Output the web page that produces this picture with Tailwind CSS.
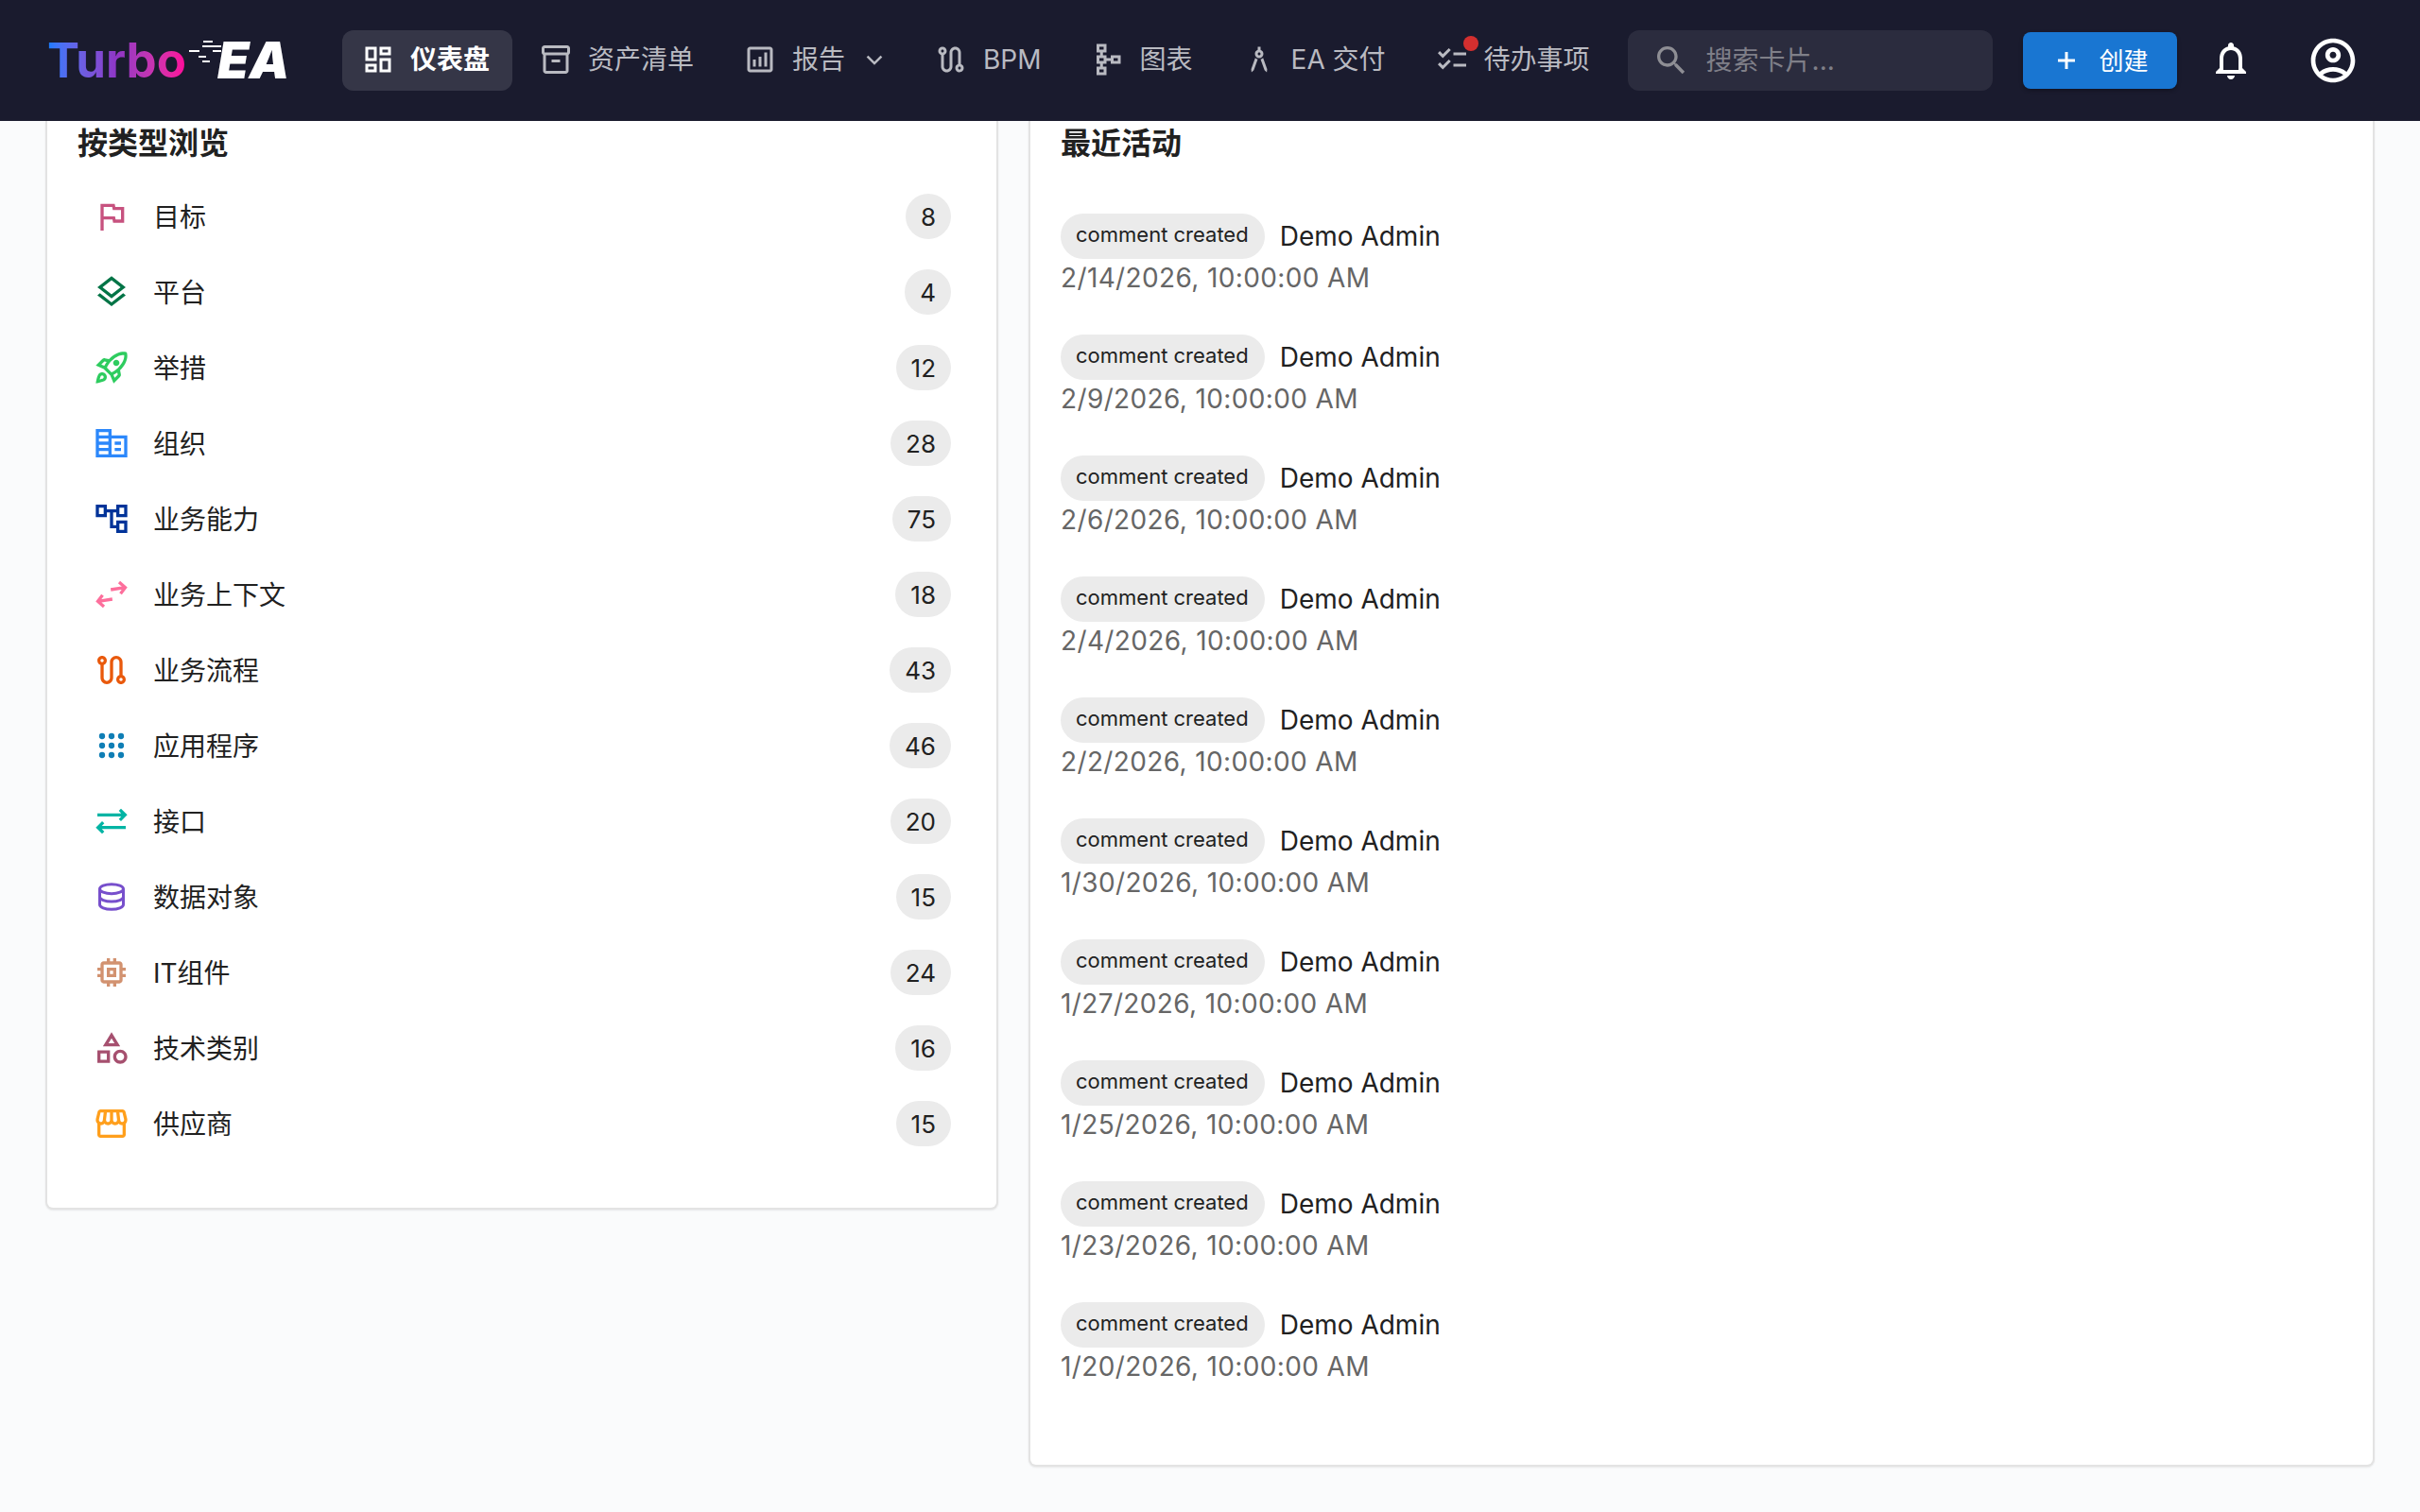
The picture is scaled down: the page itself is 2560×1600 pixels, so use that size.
<!DOCTYPE html>
<html lang="zh">
<head>
  <meta charset="UTF-8">
  <title>Turbo EA</title>
  <script src="https://cdn.jsdelivr.net/npm/@tailwindcss/browser@4"></script>
</head>
<body class="h-[1600px] overflow-hidden bg-[#fafbfc] font-['Inter','Noto_Sans_CJK_SC',sans-serif] text-[#212121]">

<!-- top bar -->
<header class="flex h-32 items-center bg-[#1a1b2e] pl-12 text-[28px] text-[#b9bac1]">
  <div class="flex w-[314px] items-center pl-0.5">
    <span class="bg-linear-to-r from-[#0a7cff] via-[#8f35c6] to-[#ff0099] bg-clip-text text-[51px] leading-[64px] font-bold text-transparent">Turbo</span>
    <svg class="ml-[3px] h-[44px] w-[34px] shrink-0" viewBox="0 0 34 44" fill="#fff">
      <rect x="15" y="1" width="10" height="2"/><rect x="14" y="6" width="20" height="2"/>
      <rect x="0" y="11" width="11" height="2"/><rect x="25" y="11" width="9" height="2"/>
      <rect x="10" y="17" width="8" height="2"/><rect x="14" y="22" width="8" height="2"/>
    </svg>
    <span class="-ml-[4px] text-[54px] leading-[64px] font-black text-white italic">EA</span>
  </div>

  <nav class="flex items-center gap-2">
    <a class="flex h-16 items-center gap-[14px] rounded-xl bg-white/12 pr-6 pb-[2px] pl-[18px] font-semibold text-white">
      <span class="flex w-10 justify-center"><svg class="size-9" viewBox="0 0 24 24" fill="currentColor"><path d="M19 5v2h-4V5h4M9 5v6H5V5h4m10 8v6h-4v-6h4M9 17v2H5v-2h4M21 3h-8v6h8V3zM11 3H3v10h8V3zm10 8h-8v10h8V11zm-10 4H3v6h8v-6z"/></svg></span>
      仪表盘
    </a>
    <a class="flex h-16 items-center gap-[14px] pr-6 pb-[2px] pl-[18px]">
      <span class="flex w-10 justify-center"><svg class="size-9" viewBox="0 0 24 24" fill="currentColor"><path d="M20 2H4c-1 0-2 .9-2 2v3.01c0 .72.43 1.34 1 1.69V20c0 1.1 1.1 2 2 2h14c.9 0 2-.9 2-2V8.7c.57-.35 1-.97 1-1.69V4c0-1.1-1-2-2-2zm-1 18H5V9h14v11zm1-13H4V4h16v3z"/><path d="M9 12h6v2H9z"/></svg></span>
      资产清单
    </a>
    <a class="flex h-16 items-center gap-[14px] pr-[15px] pb-[2px] pl-[18px]">
      <span class="flex w-10 justify-center"><svg class="size-9" viewBox="0 0 24 24" fill="currentColor"><path d="M19 3H5c-1.1 0-2 .9-2 2v14c0 1.1.9 2 2 2h14c1.1 0 2-.9 2-2V5c0-1.1-.9-2-2-2zm0 16H5V5h14v14z"/><path d="M7 12h2v5H7zM11 10h2v7h-2zM15 7h2v10h-2z"/></svg></span>
      报告
      <svg class="-ml-[3px] size-10" viewBox="0 0 24 24" fill="currentColor"><path d="M15.9 9.4 12 13.3 8.1 9.4 7 10.5l5 5 5-5z"/></svg>
    </a>
    <a class="flex h-16 items-center gap-[14px] pr-6 pb-[2px] pl-[18px]">
      <span class="flex w-10 justify-center"><svg class="size-9" viewBox="0 0 24 24" fill="currentColor"><path d="M19 15.18V7c0-2.21-1.79-4-4-4s-4 1.79-4 4v10c0 1.1-.9 2-2 2s-2-.9-2-2V8.82C8.16 8.4 9 7.3 9 6c0-1.66-1.34-3-3-3S3 4.34 3 6c0 1.3.84 2.4 2 2.82V17c0 2.21 1.79 4 4 4s4-1.79 4-4V7c0-1.1.9-2 2-2s2 .9 2 2v8.18c-1.16.41-2 1.51-2 2.82 0 1.66 1.34 3 3 3s3-1.34 3-3c0-1.3-.84-2.4-2-2.82zM6 7c-.55 0-1-.45-1-1s.45-1 1-1 1 .45 1 1-.45 1-1 1zm12 12c-.55 0-1-.45-1-1s.45-1 1-1 1 .45 1 1-.45 1-1 1z"/></svg></span>
      BPM
    </a>
    <a class="flex h-16 items-center gap-[14px] pr-6 pb-[2px] pl-[18px]">
      <span class="flex w-10 justify-center"><svg class="size-9" viewBox="0 0 24 24" fill="currentColor" fill-rule="evenodd"><path d="M14 9v2h-3V9H8.5V7H11V1H4v6h2.5v2H4v6h2.5v2H4v6h7v-6H8.5v-2H11v-2h3v2h7V9h-7zM6 3h3v2H6V3zm3 18H6v-2h3v2zm0-8H6v-2h3v2zm10 0h-3v-2h3v2z"/></svg></span>
      图表
    </a>
    <a class="flex h-16 items-center gap-[14px] pr-6 pb-[2px] pl-[18px]">
      <span class="flex w-10 justify-center"><svg class="size-9" viewBox="0 0 24 24" fill="currentColor"><path d="M6.36 18.78 6.61 21l1.62-1.54 2.77-7.6c-.68-.17-1.28-.51-1.77-.98l-2.87 7.9zM14.77 10.88c-.49.47-1.1.81-1.77.98l2.77 7.6L17.39 21l.26-2.22-2.88-7.9zM15 8c0-1.3-.84-2.4-2-2.82V3h-2v2.18C9.84 5.6 9 6.7 9 8c0 1.66 1.34 3 3 3s3-1.34 3-3zm-3 1c-.55 0-1-.45-1-1s.45-1 1-1 1 .45 1 1-.45 1-1 1z"/></svg></span>
      EA 交付
    </a>
    <a class="flex h-16 items-center gap-[14px] pr-6 pb-[2px] pl-[18px]">
      <span class="relative flex w-10 justify-center">
        <svg class="size-9" viewBox="0 0 24 24" fill="currentColor"><path d="M22 7h-9v2h9V7zm0 8h-9v2h9v-2zM5.54 11 2 7.46l1.41-1.41 2.12 2.12 4.24-4.24 1.41 1.41L5.54 11zm0 8L2 15.46l1.41-1.41 2.12 2.12 4.24-4.24 1.41 1.41L5.54 19z"/></svg>
        <span class="absolute -top-[7px] -right-[8px] size-4 rounded-full bg-[#d32f2f]"></span>
      </span>
      待办事项
    </a>
  </nav>

  <div class="ml-4 flex h-16 w-[386px] items-center rounded-xl bg-white/8 pl-[26px] text-[#7f7f88]">
    <svg class="size-10 shrink-0 text-[#8e8e94]" viewBox="0 0 24 24" fill="currentColor"><path d="M15.5 14h-.79l-.28-.27C15.41 12.59 16 11.11 16 9.5 16 5.91 13.09 3 9.5 3S3 5.91 3 9.5 5.91 16 9.5 16c1.61 0 3.09-.59 4.23-1.57l.27.28v.79l5 4.99L20.49 19l-4.99-5zm-6 0C7.01 14 5 11.99 5 9.5S7.01 5 9.5 5 14 7.01 14 9.5 11.99 14 9.5 14z"/></svg>
    <span class="ml-[17px]">搜索卡片...</span>
  </div>

  <button class="ml-8 flex h-[60px] w-[163px] items-center rounded-lg bg-[#1976d2] pl-[28px] text-[26px] text-white shadow-[0_2px_4px_rgba(0,0,0,0.3)]">
    <svg class="size-9 shrink-0" viewBox="0 0 24 24" fill="currentColor"><path d="M18 13h-5v5h-2v-5H6v-2h5V6h2v5h5v2z"/></svg>
    <span class="ml-[17px]">创建</span>
  </button>

  <svg class="ml-[33px] size-12 shrink-0 text-white" viewBox="0 0 24 24" fill="currentColor"><path d="M12 22c1.1 0 2-.9 2-2h-4c0 1.1.9 2 2 2zm6-6v-5c0-3.07-1.63-5.64-4.5-6.32V4c0-.83-.67-1.5-1.5-1.5s-1.5.67-1.5 1.5v.68C7.64 5.36 6 7.92 6 11v5l-2 2v1h16v-1l-2-2zm-2 1H8v-6c0-2.48 1.51-4.5 4-4.5s4 2.02 4 4.5v6z"/></svg>
  <svg class="ml-14 size-14 shrink-0 text-white" viewBox="0 0 24 24" fill="currentColor"><path d="M12 2C6.48 2 2 6.48 2 12s4.48 10 10 10 10-4.48 10-10S17.52 2 12 2zM7.35 18.5C8.66 17.56 10.26 17 12 17s3.34.56 4.65 1.5c-1.31.94-2.91 1.5-4.65 1.5s-3.34-.56-4.65-1.5zm10.79-1.38C16.45 15.8 14.32 15 12 15s-4.45.8-6.14 2.12C4.7 15.73 4 13.95 4 12c0-4.42 3.58-8 8-8s8 3.58 8 8c0 1.95-.7 3.73-1.86 5.12z"/><path d="M12 6c-1.93 0-3.5 1.57-3.5 3.5S10.07 13 12 13s3.5-1.57 3.5-3.5S13.93 6 12 6zm0 5c-.83 0-1.5-.67-1.5-1.5S11.17 8 12 8s1.5.67 1.5 1.5S12.83 11 12 11z"/></svg>
</header>

<main class="flex items-start gap-8 px-12">
  <!-- cards by type -->
  <section class="w-[1008px] rounded-b-lg border-2 border-t-0 border-[#e3e3e3] bg-white px-8 pb-[49px] shadow-[0_1px_2px_rgba(0,0,0,0.08)]">
    <h2 class="pt-0.5 text-[32px] leading-11 font-semibold">按类型浏览</h2>
    <ul class="mt-[15px] text-[28px]">
      <li class="flex h-20 items-center px-4"><svg class="mr-6 size-10 text-[#c7527f]" viewBox="0 0 24 24" fill="currentColor"><path d="M14.4 6 14 4H5v17h2v-7h5.6l.4 2h7V6h-5.6zm3.6 8h-3.4l-.4-2H7V6h5.4l.4 2H18v6z"/></svg><span class="flex-1 pt-0.5">目标</span><span class="flex h-12 items-center rounded-full bg-[#ebebeb] px-4 text-[26px]">8</span></li>
      <li class="flex h-20 items-center px-4"><svg class="mr-6 size-10 text-[#027446]" viewBox="0 0 24 24" fill="currentColor"><path d="m11.99 18.54-7.37-5.73L3 14.07l9 7 9-7-1.63-1.27zM12 16l7.36-5.73L21 9l-9-7-9 7 1.63 1.27L12 16zm0-11.47L17.74 9 12 13.47 6.26 9 12 4.53z"/></svg><span class="flex-1 pt-0.5">平台</span><span class="flex h-12 items-center rounded-full bg-[#ebebeb] px-4 text-[26px]">4</span></li>
      <li class="flex h-20 items-center px-4"><svg class="mr-6 size-10 text-[#2ecc5f]" viewBox="0 0 24 24" fill="currentColor"><path d="M6 15c-.83 0-1.58.34-2.12.88C2.7 17.06 2 22 2 22s4.94-.7 6.12-1.88c.54-.54.88-1.29.88-2.12 0-1.66-1.34-3-3-3zm.71 3.71c-.28.28-2.17.76-2.17.76s.47-1.88.76-2.17c.17-.19.42-.3.7-.3.55 0 1 .45 1 1 0 .28-.11.53-.29.71zm10.71-5.06c6.36-6.36 4.24-11.31 4.24-11.31S16.71.22 10.35 6.58l-2.49-.5c-.65-.13-1.33.08-1.81.55L2 10.69l5 2.14L11.17 17l2.14 5 4.05-4.05c.47-.47.68-1.15.55-1.81l-.49-2.49zM7.41 10.83l-1.91-.82 1.97-1.97 1.44.29c-.57.83-1.08 1.7-1.5 2.5zm6.58 7.67-.82-1.91c.8-.42 1.67-.93 2.49-1.5l.29 1.44-1.96 1.97zM16 12.24c-1.32 1.32-3.38 2.4-4.04 2.73l-2.93-2.93c.32-.65 1.4-2.71 2.73-4.04 4.68-4.68 8.23-3.91 8.23-3.91s.77 3.55-3.99 8.15zM15 11c1.1 0 2-.9 2-2s-.9-2-2-2-2 .9-2 2 .9 2 2 2z"/></svg><span class="flex-1 pt-0.5">举措</span><span class="flex h-12 items-center rounded-full bg-[#ebebeb] px-4 text-[26px]">12</span></li>
      <li class="flex h-20 items-center px-4"><svg class="mr-6 size-10 text-[#2c88fb]" viewBox="0 0 24 24" fill="currentColor"><path d="M12 7V3H2v18h20V7H12zM10 19H4v-2h6v2zm0-4H4v-2h6v2zm0-4H4V9h6v2zm0-4H4V5h6v2zm10 12h-8V9h8v10zm-2-8h-4v2h4v-2zm0 4h-4v2h4v-2z"/></svg><span class="flex-1 pt-0.5">组织</span><span class="flex h-12 items-center rounded-full bg-[#ebebeb] px-4 text-[26px]">28</span></li>
      <li class="flex h-20 items-center px-4"><svg class="mr-6 size-10 text-[#003399]" viewBox="0 0 24 24" fill="currentColor"><path d="M22 11V3h-7v3H9V3H2v8h7V8h2v10h4v3h7v-8h-7v3h-2V8h2v3h7zM7 9H4V5h3v4zm10 6h3v4h-3v-4zm0-10h3v4h-3V5z"/></svg><span class="flex-1 pt-0.5">业务能力</span><span class="flex h-12 items-center rounded-full bg-[#ebebeb] px-4 text-[26px]">75</span></li>
      <li class="flex h-20 items-center px-4"><svg class="mr-6 size-10 text-[#fd6f9c]" viewBox="0 0 24 24" fill="none" stroke="currentColor" stroke-width="2"><path d="M11.5 9 20.5 7.6M16.8 4.2l3.9 3.4-3 3.9M12.5 15 3.5 16.4M7.2 19.8l-3.9-3.4 3-3.9"/></svg><span class="flex-1 pt-0.5">业务上下文</span><span class="flex h-12 items-center rounded-full bg-[#ebebeb] px-4 text-[26px]">18</span></li>
      <li class="flex h-20 items-center px-4"><svg class="mr-6 size-10 text-[#e9590c]" viewBox="0 0 24 24" fill="currentColor"><path d="M19 15.18V7c0-2.21-1.79-4-4-4s-4 1.79-4 4v10c0 1.1-.9 2-2 2s-2-.9-2-2V8.82C8.16 8.4 9 7.3 9 6c0-1.66-1.34-3-3-3S3 4.34 3 6c0 1.3.84 2.4 2 2.82V17c0 2.21 1.79 4 4 4s4-1.79 4-4V7c0-1.1.9-2 2-2s2 .9 2 2v8.18c-1.16.41-2 1.51-2 2.82 0 1.66 1.34 3 3 3s3-1.34 3-3c0-1.3-.84-2.4-2-2.82zM6 7c-.55 0-1-.45-1-1s.45-1 1-1 1 .45 1 1-.45 1-1 1zm12 12c-.55 0-1-.45-1-1s.45-1 1-1 1 .45 1 1-.45 1-1 1z"/></svg><span class="flex-1 pt-0.5">业务流程</span><span class="flex h-12 items-center rounded-full bg-[#ebebeb] px-4 text-[26px]">43</span></li>
      <li class="flex h-20 items-center px-4"><svg class="mr-6 size-10 text-[#0f7eb5]" viewBox="0 0 24 24" fill="currentColor"><circle cx="6" cy="6" r="1.9"/><circle cx="12" cy="6" r="1.9"/><circle cx="18" cy="6" r="1.9"/><circle cx="6" cy="12" r="1.9"/><circle cx="12" cy="12" r="1.9"/><circle cx="18" cy="12" r="1.9"/><circle cx="6" cy="18" r="1.9"/><circle cx="12" cy="18" r="1.9"/><circle cx="18" cy="18" r="1.9"/></svg><span class="flex-1 pt-0.5">应用程序</span><span class="flex h-12 items-center rounded-full bg-[#ebebeb] px-4 text-[26px]">46</span></li>
      <li class="flex h-20 items-center px-4"><svg class="mr-6 size-10 text-[#02b4a4]" viewBox="0 0 24 24" fill="currentColor"><path d="M7.41 13.41 6 12l-4 4 4 4 1.41-1.41L5.83 17H21v-2H5.83zM16.59 10.59 18 12l4-4-4-4-1.41 1.41L18.17 7H3v2h15.17z"/></svg><span class="flex-1 pt-0.5">接口</span><span class="flex h-12 items-center rounded-full bg-[#ebebeb] px-4 text-[26px]">20</span></li>
      <li class="flex h-20 items-center px-4"><svg class="mr-6 size-10 text-[#774fcc]" viewBox="0 0 24 24" fill="none" stroke="currentColor" stroke-width="1.8"><ellipse cx="12" cy="7" rx="7.5" ry="3"/><path d="M4.5 7v10c0 1.66 3.36 3 7.5 3s7.5-1.34 7.5-3V7M4.5 12c0 1.66 3.36 3 7.5 3s7.5-1.34 7.5-3"/></svg><span class="flex-1 pt-0.5">数据对象</span><span class="flex h-12 items-center rounded-full bg-[#ebebeb] px-4 text-[26px]">15</span></li>
      <li class="flex h-20 items-center px-4"><svg class="mr-6 size-10 text-[#d29270]" viewBox="0 0 24 24" fill="currentColor"><path d="M15 9H9v6h6V9zm-2 4h-2v-2h2v2zm8-2V9h-2V7c0-1.1-.9-2-2-2h-2V3h-2v2h-2V3H9v2H7c-1.1 0-2 .9-2 2v2H3v2h2v2H3v2h2v2c0 1.1.9 2 2 2h2v2h2v-2h2v2h2v-2h2c1.1 0 2-.9 2-2v-2h2v-2h-2v-2h2zm-4 6H7V7h10v10z"/></svg><span class="flex-1 pt-0.5">IT组件</span><span class="flex h-12 items-center rounded-full bg-[#ebebeb] px-4 text-[26px]">24</span></li>
      <li class="flex h-20 items-center px-4"><svg class="mr-6 size-10 text-[#a6506f]" viewBox="0 0 24 24" fill="currentColor"><path d="m12 2-5.5 9h11L12 2zm0 3.84L13.93 9h-3.87L12 5.84zM17.5 13c-2.49 0-4.5 2.01-4.5 4.5s2.01 4.5 4.5 4.5 4.5-2.01 4.5-4.5-2.01-4.5-4.5-4.5zm0 7c-1.38 0-2.5-1.12-2.5-2.5s1.12-2.5 2.5-2.5 2.5 1.12 2.5 2.5-1.12 2.5-2.5 2.5zM3 21.5h8v-8H3v8zm2-6h4v4H5v-4z"/></svg><span class="flex-1 pt-0.5">技术类别</span><span class="flex h-12 items-center rounded-full bg-[#ebebeb] px-4 text-[26px]">16</span></li>
      <li class="flex h-20 items-center px-4"><svg class="mr-6 size-10 text-[#ff9f1c]" viewBox="0 0 24 24" fill="currentColor"><path d="m21.9 8.89-1.05-4.37c-.22-.9-1-1.52-1.91-1.52H5.05c-.9 0-1.69.63-1.9 1.52L2.1 8.89c-.24 1.02-.02 2.06.62 2.88.08.11.19.19.28.29V19c0 1.1.9 2 2 2h14c1.1 0 2-.9 2-2v-6.94c.09-.09.2-.18.28-.28.64-.82.87-1.87.62-2.89zm-2.99-3.9 1.05 4.37c.1.42.01.84-.25 1.17-.14.18-.44.47-.94.47-.61 0-1.14-.49-1.21-1.14L16.98 5l1.93-.01zM13 5h1.96l.54 4.52c.05.39-.07.78-.33 1.07-.22.26-.54.41-.95.41-.67 0-1.22-.59-1.22-1.31V5zM8.49 9.52 9.04 5H11v4.69c0 .72-.55 1.31-1.29 1.31-.34 0-.65-.15-.89-.41-.25-.29-.37-.68-.33-1.07zm-4.45-.16L5.05 5h1.97l-.58 4.86c-.08.65-.6 1.14-1.21 1.14-.49 0-.8-.29-.93-.47-.27-.32-.36-.75-.26-1.17zM5 19v-6.03c.08.01.15.03.23.03.87 0 1.66-.36 2.24-.95.6.6 1.4.95 2.31.95.87 0 1.65-.36 2.23-.93.59.57 1.39.93 2.29.93.84 0 1.64-.35 2.24-.95.58.59 1.37.95 2.24.95.08 0 .15-.02.23-.03V19H5z"/></svg><span class="flex-1 pt-0.5">供应商</span><span class="flex h-12 items-center rounded-full bg-[#ebebeb] px-4 text-[26px]">15</span></li>
    </ul>
  </section>

  <!-- recent activity -->
  <section class="flex-1 rounded-b-lg border-2 border-t-0 border-[#e3e3e3] bg-white px-8 pb-11 shadow-[0_1px_2px_rgba(0,0,0,0.08)]">
    <h2 class="pt-0.5 text-[32px] leading-11 font-semibold">最近活动</h2>
    <ul class="mt-[52px]">
      <li class="h-32"><div class="flex h-12 items-center gap-4"><span class="flex h-12 items-center rounded-full bg-[#ebebeb] pr-[17px] pb-1 pl-4 text-[22px]">comment created</span><span class="text-[28px]">Demo Admin</span></div><p class="text-[28px] leading-10 tracking-[0.37px] text-[#666]">2/14/2026, 10:00:00 AM</p></li>
      <li class="h-32"><div class="flex h-12 items-center gap-4"><span class="flex h-12 items-center rounded-full bg-[#ebebeb] pr-[17px] pb-1 pl-4 text-[22px]">comment created</span><span class="text-[28px]">Demo Admin</span></div><p class="text-[28px] leading-10 tracking-[0.37px] text-[#666]">2/9/2026, 10:00:00 AM</p></li>
      <li class="h-32"><div class="flex h-12 items-center gap-4"><span class="flex h-12 items-center rounded-full bg-[#ebebeb] pr-[17px] pb-1 pl-4 text-[22px]">comment created</span><span class="text-[28px]">Demo Admin</span></div><p class="text-[28px] leading-10 tracking-[0.37px] text-[#666]">2/6/2026, 10:00:00 AM</p></li>
      <li class="h-32"><div class="flex h-12 items-center gap-4"><span class="flex h-12 items-center rounded-full bg-[#ebebeb] pr-[17px] pb-1 pl-4 text-[22px]">comment created</span><span class="text-[28px]">Demo Admin</span></div><p class="text-[28px] leading-10 tracking-[0.37px] text-[#666]">2/4/2026, 10:00:00 AM</p></li>
      <li class="h-32"><div class="flex h-12 items-center gap-4"><span class="flex h-12 items-center rounded-full bg-[#ebebeb] pr-[17px] pb-1 pl-4 text-[22px]">comment created</span><span class="text-[28px]">Demo Admin</span></div><p class="text-[28px] leading-10 tracking-[0.37px] text-[#666]">2/2/2026, 10:00:00 AM</p></li>
      <li class="h-32"><div class="flex h-12 items-center gap-4"><span class="flex h-12 items-center rounded-full bg-[#ebebeb] pr-[17px] pb-1 pl-4 text-[22px]">comment created</span><span class="text-[28px]">Demo Admin</span></div><p class="text-[28px] leading-10 tracking-[0.37px] text-[#666]">1/30/2026, 10:00:00 AM</p></li>
      <li class="h-32"><div class="flex h-12 items-center gap-4"><span class="flex h-12 items-center rounded-full bg-[#ebebeb] pr-[17px] pb-1 pl-4 text-[22px]">comment created</span><span class="text-[28px]">Demo Admin</span></div><p class="text-[28px] leading-10 tracking-[0.37px] text-[#666]">1/27/2026, 10:00:00 AM</p></li>
      <li class="h-32"><div class="flex h-12 items-center gap-4"><span class="flex h-12 items-center rounded-full bg-[#ebebeb] pr-[17px] pb-1 pl-4 text-[22px]">comment created</span><span class="text-[28px]">Demo Admin</span></div><p class="text-[28px] leading-10 tracking-[0.37px] text-[#666]">1/25/2026, 10:00:00 AM</p></li>
      <li class="h-32"><div class="flex h-12 items-center gap-4"><span class="flex h-12 items-center rounded-full bg-[#ebebeb] pr-[17px] pb-1 pl-4 text-[22px]">comment created</span><span class="text-[28px]">Demo Admin</span></div><p class="text-[28px] leading-10 tracking-[0.37px] text-[#666]">1/23/2026, 10:00:00 AM</p></li>
      <li class="h-32"><div class="flex h-12 items-center gap-4"><span class="flex h-12 items-center rounded-full bg-[#ebebeb] pr-[17px] pb-1 pl-4 text-[22px]">comment created</span><span class="text-[28px]">Demo Admin</span></div><p class="text-[28px] leading-10 tracking-[0.37px] text-[#666]">1/20/2026, 10:00:00 AM</p></li>
    </ul>
  </section>
</main>
</body>
</html>
